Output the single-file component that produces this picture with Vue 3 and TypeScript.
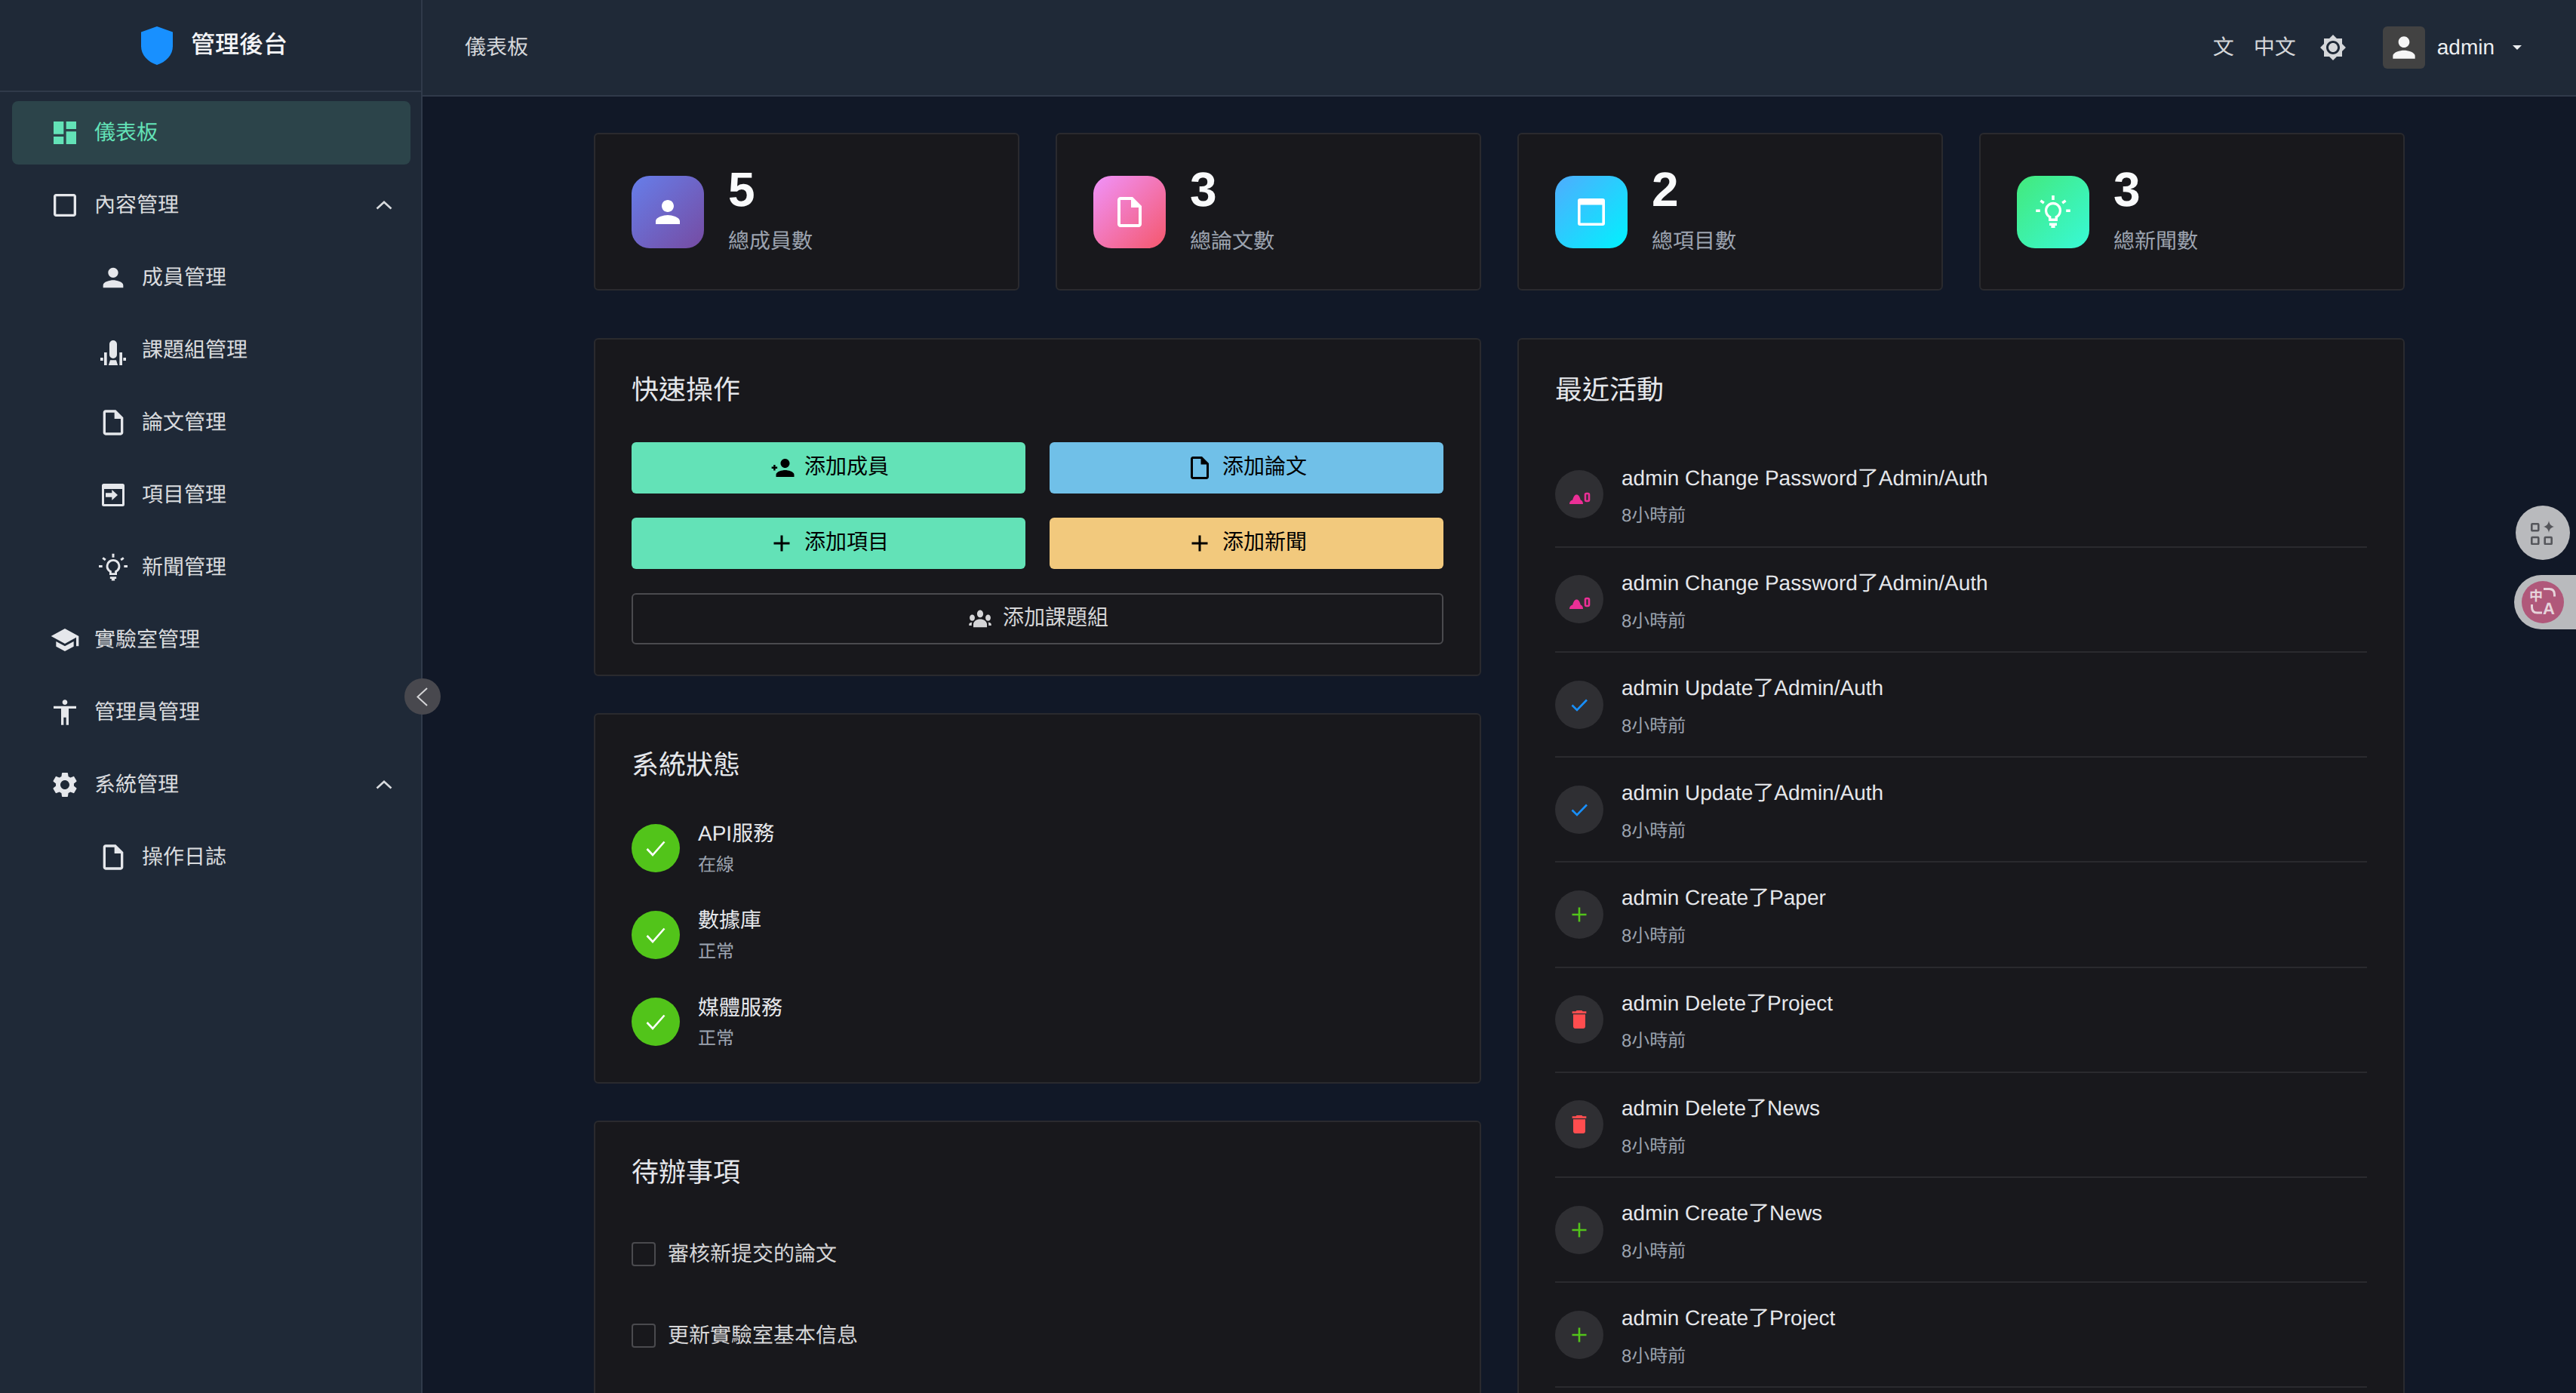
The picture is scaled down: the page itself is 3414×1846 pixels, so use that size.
<script setup lang="ts">
interface MenuItem {
  label: string;
  icon: string;
  active?: boolean;
  sub?: boolean;
  open?: boolean;
}

const icons: Record<string, string> = {
  dashboard: 'M3 13h8V3H3v10zm0 8h8v-6H3v6zm10 0h8V11h-8v10zm0-18v6h8V3h-8z',
  box: 'M19 5v14H5V5h14m0-2H5c-1.1 0-2 .9-2 2v14c0 1.1.9 2 2 2h14c1.1 0 2-.9 2-2V5c0-1.1-.9-2-2-2z',
  person: 'M12 12c2.21 0 4-1.79 4-4s-1.79-4-4-4-4 1.79-4 4 1.79 4 4 4zm0 2c-2.67 0-8 1.34-8 4v2h16v-2c0-2.66-5.33-4-8-4z',
  mic: 'M12 4.2a3 3 0 0 1 3 3v8.4a3 3 0 0 1-6 0V7.2a3 3 0 0 1 3-3zM4.8 13.8h2.2V24H4.8zM17 13.8h2.2V24H17zM1.8 18h2.2v2.4H1.8zM20 18h2.2v2.4H20zM9.6 20h4.8l1.4 4.4H8.2z',
  file: 'M14 2H6c-1.1 0-1.99.9-1.99 2L4 20c0 1.1.89 2 1.99 2H18c1.1 0 2-.9 2-2V8l-6-6zM6 20V4h7v5h5v11H6z',
  project: 'M4.5 3h15A1.5 1.5 0 0 1 21 4.5v15a1.5 1.5 0 0 1-1.5 1.5h-15A1.5 1.5 0 0 1 3 19.5v-15A1.5 1.5 0 0 1 4.5 3zM4.8 7.2v12h14.4v-12zM6 10.4h5V7.8l4.6 4.2-4.6 4.2v-2.6H6z',
  bulb: 'M12 5.4a5.6 5.6 0 0 0-3 10.3V18h6v-2.3a5.6 5.6 0 0 0-3-10.3zm1.3 9.3v1.6h-2.6v-1.6a3.9 3.9 0 1 1 2.6 0zM9.5 19.3h5V21h-1.2v1.5h-2.6V21H9.5zM11.1 1h1.8v3h-1.8zM.6 10.2h2.8V12H.6zM20.6 10.2h2.8V12h-2.8zM4.2 3.7l2.2 1.6-1 1.4-2.2-1.6zM19.800 3.7l1 1.4-2.2 1.6-1-1.4z',
  school: 'M5 13.18v4L12 21l7-3.82v-4L12 17l-7-3.82zM12 3L1 9l11 6 9-4.91V17h2V9L12 3z',
  access: 'M12 2c1.1 0 2 .9 2 2s-.9 2-2 2-2-.9-2-2 .9-2 2-2zm9 7h-6v13h-2v-6h-2v6H9V9H3V7h18v2z',
  gear: 'M19.14 12.94c.04-.3.06-.61.06-.94 0-.32-.02-.64-.07-.94l2.03-1.58c.18-.14.23-.41.12-.61l-1.92-3.32c-.12-.22-.37-.29-.59-.22l-2.39.96c-.5-.38-1.03-.7-1.62-.94l-.36-2.54c-.04-.24-.24-.41-.48-.41h-3.84c-.24 0-.43.17-.47.41l-.36 2.54c-.59.24-1.13.57-1.62.94l-2.39-.96c-.22-.08-.47 0-.59.22L2.74 8.87c-.12.21-.08.47.12.61l2.03 1.58c-.05.3-.09.63-.09.94s.02.64.07.94l-2.03 1.58c-.18.14-.23.41-.12.61l1.92 3.32c.12.22.37.29.59.22l2.39-.96c.5.38 1.03.7 1.62.94l.36 2.54c.05.24.24.41.48.41h3.84c.24 0 .44-.17.47-.41l.36-2.54c.59-.24 1.13-.56 1.62-.94l2.39.96c.22.08.47 0 .59-.22l1.92-3.32c.12-.22.07-.47-.12-.61l-2.01-1.58zM12 15.6c-1.98 0-3.6-1.62-3.6-3.6s1.62-3.6 3.6-3.6 3.6 1.62 3.6 3.6-1.62 3.6-3.6 3.6z',
  sun: 'M20 8.69V4h-4.69L12 .69 8.69 4H4v4.69L.69 12 4 15.31V20h4.69L12 23.31 15.31 20H20v-4.69L23.31 12 20 8.69zM12 18c-3.31 0-6-2.69-6-6s2.69-6 6-6 6 2.69 6 6-2.69 6-6 6zm0-10c-2.21 0-4 1.79-4 4s1.79 4 4 4 4-1.79 4-4-1.79-4-4-4z',
  web: 'M4.5 3h15A1.5 1.5 0 0 1 21 4.5v15a1.5 1.5 0 0 1-1.5 1.5h-15A1.5 1.5 0 0 1 3 19.5v-15A1.5 1.5 0 0 1 4.5 3zM4.800 7.2v12h14.4v-12z',
  personAdd: 'M15 12c2.21 0 4-1.79 4-4s-1.79-4-4-4-4 1.79-4 4 1.79 4 4 4zM4.800 9.300h1.600v1.700h1.700v1.600H6.400v1.700H4.800v-1.700H3.100V11h1.700zM15 14c-2.67 0-8 1.34-8 4v2h16v-2c0-2.66-5.33-4-8-4z',
  plus: 'M19 13h-6v6h-2v-6H5v-2h6V5h2v6h6v2z',
  groups: 'M12 4.300c1.500 0 2.700 1.500 2.700 3.300S13.500 10.900 12 10.900 9.300 9.400 9.300 7.600 10.500 4.300 12 4.300zM5 8.300c1.300 0 2.300 1.300 2.300 2.800S6.300 13.900 5 13.900s-2.300-1.300-2.300-2.800S3.700 8.300 5 8.300zM19 8.300c1.300 0 2.300 1.300 2.300 2.800s-1 2.800-2.300 2.800-2.300-1.300-2.300-2.800 1-2.800 2.300-2.800zM12 12.300c3.200 0 5.600 1.700 6 4.200v3H6v-3c.4-2.500 2.800-4.200 6-4.200zM4.900 15.200c-.3.5-.4 1-.4 1.500v1.300H2.200v-1.100c0-.9 1.200-1.700 2.700-1.700zM19.100 15.200c1.500 0 2.700.8 2.700 1.700V18h-2.300v-1.300c0-.5-.1-1-.4-1.500z',
  trash: 'M6 19c0 1.1.9 2 2 2h8c1.1 0 2-.9 2-2V7H6v12zM19 4h-3.500l-1-1h-5l-1 1H5v2h14V4z',
};

const menu: MenuItem[] = [
  { label: '儀表板', icon: 'dashboard', active: true },
  { label: '內容管理', icon: 'box', open: true },
  { label: '成員管理', icon: 'person', sub: true },
  { label: '課題組管理', icon: 'mic', sub: true },
  { label: '論文管理', icon: 'file', sub: true },
  { label: '項目管理', icon: 'project', sub: true },
  { label: '新聞管理', icon: 'bulb', sub: true },
  { label: '實驗室管理', icon: 'school' },
  { label: '管理員管理', icon: 'access' },
  { label: '系統管理', icon: 'gear', open: true },
  { label: '操作日誌', icon: 'file', sub: true },
];

const stats = [
  { value: 5, label: '總成員數', icon: 'person', tone: 'purple' },
  { value: 3, label: '總論文數', icon: 'file', tone: 'pink' },
  { value: 2, label: '總項目數', icon: 'web', tone: 'blue' },
  { value: 3, label: '總新聞數', icon: 'bulb', tone: 'green' },
];

const actions = [
  { label: '添加成員', icon: 'personAdd', tone: 'primary' },
  { label: '添加論文', icon: 'file', tone: 'info' },
  { label: '添加項目', icon: 'plus', tone: 'primary' },
  { label: '添加新聞', icon: 'plus', tone: 'warning' },
  { label: '添加課題組', icon: 'groups', tone: 'ghost' },
];

const services = [
  { name: 'API服務', state: '在線' },
  { name: '數據庫', state: '正常' },
  { name: '媒體服務', state: '正常' },
];

const todos = ['審核新提交的論文', '更新實驗室基本信息'];

const activities = [
  { text: 'admin Change Password了Admin/Auth', kind: 'password' },
  { text: 'admin Change Password了Admin/Auth', kind: 'password' },
  { text: 'admin Update了Admin/Auth', kind: 'update' },
  { text: 'admin Update了Admin/Auth', kind: 'update' },
  { text: 'admin Create了Paper', kind: 'create' },
  { text: 'admin Delete了Project', kind: 'delete' },
  { text: 'admin Delete了News', kind: 'delete' },
  { text: 'admin Create了News', kind: 'create' },
  { text: 'admin Create了Project', kind: 'create' },
];
</script>

<template>
  <div class="layout">
    <aside class="sidebar">
      <div class="brand">
        <svg class="shield" viewBox="0 0 42 51">
          <path d="M21 0l21 7.6v18.6C42 38 33 47 21 51 9 47 0 38 0 26.200V7.600z" />
        </svg>
        <span>管理後台</span>
      </div>
      <nav class="menu">
        <div
          v-for="item in menu"
          :key="item.label"
          class="menu-item"
          :class="{ active: item.active, sub: item.sub }"
        >
          <svg class="menu-icon" viewBox="0 0 24 24"><path :d="icons[item.icon]" /></svg>
          <span class="menu-label">{{ item.label }}</span>
          <svg v-if="item.open" class="chevron" viewBox="0 0 22 12"><path d="M1.500 10.500L11 1.800l9.500 8.700" /></svg>
        </div>
      </nav>
      <button class="collapse">
        <svg viewBox="0 0 48 48"><path d="M30 13L17.500 24.500 30 36" /></svg>
      </button>
    </aside>

    <div class="right">
      <header class="topbar">
        <span class="crumb">儀表板</span>
        <div class="top-actions">
          <span class="lang-icon">文</span>
          <span class="lang">中文</span>
          <svg class="theme" viewBox="0 0 24 24"><path :d="icons.sun" /></svg>
          <div class="avatar">
            <svg viewBox="0 0 24 24"><path :d="icons.person" /></svg>
          </div>
          <span class="user">admin</span>
          <svg class="caret" viewBox="0 0 12 6"><path d="M0 0h12L6 6z" /></svg>
        </div>
      </header>

      <main class="main">
        <div class="content">
          <section class="stats">
            <div v-for="stat in stats" :key="stat.label" class="card stat">
              <div class="stat-icon" :class="stat.tone">
                <svg viewBox="0 0 24 24"><path :d="icons[stat.icon]" /></svg>
              </div>
              <div>
                <div class="stat-value">{{ stat.value }}</div>
                <div class="stat-label">{{ stat.label }}</div>
              </div>
            </div>
          </section>

          <section class="columns">
            <div class="column">
              <div class="card panel quick">
                <h3>快速操作</h3>
                <div class="actions">
                  <button v-for="action in actions" :key="action.label" class="btn" :class="action.tone">
                    <svg viewBox="0 0 24 24"><path :d="icons[action.icon]" /></svg>
                    <span>{{ action.label }}</span>
                  </button>
                </div>
              </div>

              <div class="card panel">
                <h3>系統狀態</h3>
                <div class="services">
                  <div v-for="service in services" :key="service.name" class="service">
                    <span class="ok">
                      <svg viewBox="0 0 64 64"><path d="M20.500 33l7.500 8L43.500 23.500" /></svg>
                    </span>
                    <div class="service-body">
                      <div class="service-name">{{ service.name }}</div>
                      <div class="service-state">{{ service.state }}</div>
                    </div>
                  </div>
                </div>
              </div>

              <div class="card panel">
                <h3>待辦事項</h3>
                <label v-for="todo in todos" :key="todo" class="todo">
                  <span class="check" />
                  <span>{{ todo }}</span>
                </label>
              </div>
            </div>

            <div class="card panel feed">
              <h3>最近活動</h3>
              <div v-for="(activity, i) in activities" :key="i" class="activity">
                <span class="activity-icon" :class="activity.kind">
                  <svg v-if="activity.kind === 'password'" viewBox="0 0 64 64">
                    <path class="fill" d="M19 45c0-3 1.500-5 4.200-5.600C24.500 35 26 32.500 28.500 32.500s4 2.500 5.300 6.900C36 40 37 42 37 45z" />
                    <rect class="line" x="40" y="31" width="5" height="10" rx="1.500" />
                  </svg>
                  <svg v-else-if="activity.kind === 'update'" viewBox="0 0 64 64">
                    <path class="line" d="M22.500 32.500l6.500 6.500L42 25.500" />
                  </svg>
                  <svg v-else-if="activity.kind === 'create'" viewBox="0 0 64 64">
                    <path class="line" d="M22.500 32h19M32 22.500v19" />
                  </svg>
                  <svg v-else class="trash" viewBox="0 0 24 24"><path :d="icons.trash" /></svg>
                </span>
                <div>
                  <div class="activity-text">{{ activity.text }}</div>
                  <div class="activity-time">8小時前</div>
                </div>
              </div>
            </div>
          </section>
        </div>
      </main>
    </div>

    <div class="float-btn">
      <svg viewBox="0 0 32 32">
        <rect x="1.300" y="4.300" width="9" height="9" rx="1" />
        <rect x="1.300" y="22" width="9" height="9" rx="1" />
        <rect x="18.700" y="22" width="9" height="9" rx="1" />
        <path class="star" d="M24 0c.7 4.600 2.800 7.300 7.500 8-4.700.7-6.800 3.400-7.500 8-.7-4.600-2.800-7.300-7.500-8 4.700-.7 6.800-3.400 7.500-8z" />
      </svg>
    </div>
    <div class="float-pill">
      <div class="float-dot">
        <svg class="dot-arcs" viewBox="0 0 56 56">
          <path d="M29 10.500h7.500c4.500 0 7 2.500 7 7.500v2.500M13.500 31v3.500c0 5 2.500 7.500 7 7.500H27" />
        </svg>
        <span class="dot-zh">中</span>
        <span class="dot-en">A</span>
      </div>
    </div>
  </div>
</template>

<style>
html,
body {
  margin: 0;
  background: #111827;
}
</style>

<style scoped>
.layout {
  display: flex;
  height: 100vh;
  overflow: hidden;
  position: relative;
  background: #111827;
  color: rgba(255, 255, 255, 0.82);
  font-family: "Liberation Sans", "Noto Sans CJK TC", sans-serif;
  font-size: 28px;
  line-height: 1.6;
  text-rendering: geometricPrecision;
}

svg {
  display: block;
  fill: currentColor;
  fill-rule: evenodd;
  flex-shrink: 0;
}

/* sidebar */
.sidebar {
  width: 560px;
  flex-shrink: 0;
  box-sizing: border-box;
  background: #1f2937;
  border-right: 2px solid #303a4a;
  position: relative;
  z-index: 2;
}

.brand {
  height: 122px;
  box-sizing: border-box;
  border-bottom: 2px solid #303a4a;
  padding-left: 10px;
  display: flex;
  align-items: center;
  justify-content: center;
  gap: 24px;
  font-size: 32px;
  font-weight: 500;
  color: #f3f4f6;
}

.shield {
  width: 42px;
  height: 51px;
  fill: #1890ff;
}

.menu {
  padding-top: 12px;
}

.menu-item {
  height: 84px;
  margin: 0 14px 12px 16px;
  padding-left: 50px;
  padding-right: 24px;
  border-radius: 8px;
  display: flex;
  align-items: center;
  color: #d9dbde;
}

.menu-item.sub {
  padding-left: 114px;
}

.menu-item.active {
  background: #2c444a;
  color: #63e2b7;
}

.menu-icon {
  width: 40px;
  height: 40px;
  margin-right: 19px;
  color: #e5e7eb;
}

.sub .menu-icon {
  margin-right: 18px;
}

.active .menu-icon {
  color: #63e2b7;
}

.menu-label {
  flex: 1;
}

.chevron {
  width: 22px;
  height: 12px;
  fill: none;
  stroke: #d9dbde;
  stroke-width: 2.6;
}

.collapse {
  position: absolute;
  top: 899px;
  right: -26px;
  width: 48px;
  height: 48px;
  padding: 0;
  border: 0;
  border-radius: 50%;
  background: #48484e;
}

.collapse svg {
  width: 48px;
  height: 48px;
  fill: none;
  stroke: #d5d5d7;
  stroke-width: 2;
}

/* top bar */
.right {
  flex: 1;
  min-width: 0;
  display: flex;
  flex-direction: column;
}

.topbar {
  height: 128px;
  flex-shrink: 0;
  box-sizing: border-box;
  background: #1f2937;
  border-bottom: 2px solid #303a4a;
  padding: 0 72px 0 56px;
  display: flex;
  align-items: center;
  justify-content: space-between;
}

.crumb {
  color: #d5d7da;
}

.top-actions {
  display: flex;
  align-items: center;
  color: #d5d7da;
}

.lang-icon {
  font-size: 28px;
  margin-right: 26px;
}

.lang {
  margin-right: 31px;
}

.theme {
  width: 36px;
  height: 36px;
  margin-right: 48px;
}

.avatar {
  width: 56px;
  height: 56px;
  border-radius: 6px;
  background: #424242;
  display: flex;
  align-items: center;
  justify-content: center;
  margin-right: 16px;
  color: #f5f5f5;
}

.avatar svg {
  width: 44px;
  height: 44px;
}

.user {
  color: #eceef0;
  margin-right: 24px;
}

.caret {
  width: 12px;
  height: 6px;
  color: #eceef0;
}

/* main */
.main {
  flex: 1;
  min-height: 0;
  overflow: hidden;
  padding-top: 48px;
}

.content {
  width: 2400px;
  margin: 0 auto;
}

.card {
  box-sizing: border-box;
  background: #18181c;
  border: 2px solid #2a2a2e;
  border-radius: 6px;
}

.stats {
  display: grid;
  grid-template-columns: repeat(4, 1fr);
  gap: 48px;
  margin-bottom: 63px;
}

.stat {
  padding: 48px;
  display: flex;
  align-items: center;
  gap: 32px;
}

.stat-icon {
  width: 96px;
  height: 96px;
  border-radius: 24px;
  display: flex;
  align-items: center;
  justify-content: center;
  color: #fff;
}

.stat-icon svg {
  width: 48px;
  height: 48px;
}

.purple {
  background: linear-gradient(135deg, #667eea, #764ba2);
}

.pink {
  background: linear-gradient(135deg, #f093fb, #f5576c);
}

.blue {
  background: linear-gradient(135deg, #4facfe, #00f2fe);
}

.green {
  background: linear-gradient(135deg, #43e97b, #38f9d7);
}

.stat-value {
  font-size: 64px;
  font-weight: 700;
  line-height: 50px;
  margin-bottom: 28px;
  color: #f9fafb;
}

.stat-label {
  line-height: 31px;
  color: #9ca3af;
}

.columns {
  display: grid;
  grid-template-columns: 1fr 1fr;
  gap: 48px;
  align-items: start;
}

.column {
  display: flex;
  flex-direction: column;
  gap: 49px;
}

.panel {
  padding: 38px 48px;
}

.quick {
  padding-bottom: 40px;
}

h3 {
  margin: 0 0 40px;
  font-size: 36px;
  font-weight: 400;
  line-height: 1.6;
  color: #e5e7eb;
}

.feed h3 {
  margin-bottom: 41px;
}

.actions {
  display: grid;
  grid-template-columns: 1fr 1fr;
  gap: 32px;
}

.btn {
  height: 68px;
  border: 0;
  border-radius: 6px;
  display: flex;
  align-items: center;
  justify-content: center;
  gap: 12px;
  font: inherit;
  color: #000;
}

.btn svg {
  width: 36px;
  height: 36px;
}

.primary {
  background: #63e2b7;
}

.info {
  background: #70c0e8;
}

.warning {
  background: #f2c97d;
}

.ghost {
  grid-column: span 2;
  background: transparent;
  border: 2px solid #4a4a4e;
  color: #d5d5d7;
}

.services {
  display: flex;
  flex-direction: column;
  gap: 32px;
}

.service {
  display: flex;
  align-items: center;
  gap: 24px;
}

.service-body {
  padding-top: 1px;
}

.ok {
  width: 64px;
  height: 64px;
  border-radius: 50%;
  background: #52c41a;
}

.ok svg {
  width: 64px;
  height: 64px;
  fill: none;
  stroke: #fff;
  stroke-width: 2.6;
}

.service-name {
  color: #e5e7eb;
}

.service-state {
  font-size: 24px;
  line-height: 37.4px;
  color: #9ca3af;
}

.todo {
  height: 80px;
  margin-bottom: 28px;
  display: flex;
  align-items: center;
  gap: 16px;
  color: #d5d5d7;
}

.check {
  width: 32px;
  height: 32px;
  box-sizing: border-box;
  border: 2px solid #4a4a4e;
  border-radius: 4px;
}

.activity {
  display: flex;
  align-items: center;
  gap: 24px;
  padding: 25px 0 20px;
  border-bottom: 2px solid #2a2a2e;
}

.activity-icon {
  width: 64px;
  height: 64px;
  flex-shrink: 0;
  margin-top: -5px;
  border-radius: 50%;
  background: #2f2f33;
  display: flex;
  align-items: center;
  justify-content: center;
}

.activity-icon svg {
  width: 64px;
  height: 64px;
}

.activity-icon svg.trash {
  width: 32px;
  height: 32px;
}

.password {
  color: #eb2f96;
}

.update {
  color: #1890ff;
}

.create {
  color: #52c41a;
}

.delete {
  color: #ff4d4f;
}

.fill {
  fill: currentColor;
}

.line {
  fill: none;
  stroke: currentColor;
  stroke-width: 2.6;
}

.activity-text {
  color: #e5e7eb;
  margin-bottom: 9px;
}

.activity-time {
  font-size: 24px;
  color: #9ca3af;
}

/* floating tools */
.float-btn {
  position: absolute;
  top: 670px;
  right: 8px;
  width: 72px;
  height: 72px;
  border-radius: 50%;
  background: #b9babd;
  display: flex;
  align-items: center;
  justify-content: center;
}

.float-btn svg {
  width: 32px;
  height: 32px;
}

.float-btn rect {
  fill: none;
  stroke: #55565b;
  stroke-width: 2.6;
}

.float-btn .star {
  fill: #55565b;
}

.float-pill {
  position: absolute;
  top: 762px;
  right: 0;
  width: 82px;
  height: 72px;
  box-sizing: border-box;
  padding: 8px 0 8px 10px;
  border-radius: 36px 0 0 36px;
  background: #b9babd;
}

.float-dot {
  width: 56px;
  height: 56px;
  border-radius: 50%;
  background: #b0587a;
  position: relative;
  color: #e6d3da;
  font-weight: 700;
  line-height: 1;
}

.dot-arcs {
  position: absolute;
  left: 0;
  top: 0;
  width: 56px;
  height: 56px;
  fill: none;
  stroke: #e6d3da;
  stroke-width: 3;
}

.dot-zh {
  position: absolute;
  left: 10px;
  top: 11px;
  font-size: 18px;
}

.dot-en {
  position: absolute;
  left: 28px;
  top: 26px;
  font-size: 22px;
}
</style>
